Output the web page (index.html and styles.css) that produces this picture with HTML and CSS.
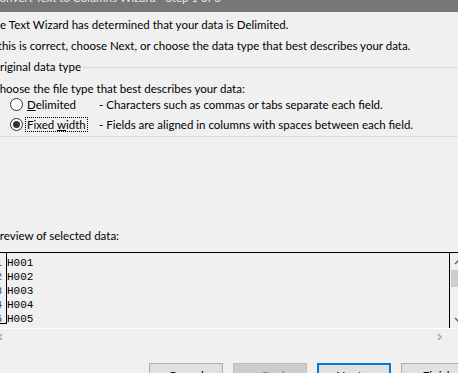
FILE: index.html
```html
<!DOCTYPE html>
<html lang="en">

<head>
    <meta charset="UTF-8">
    <meta name="viewport" content="width=device-width, initial-scale=1.0">
    <link rel="stylesheet" href="styles.css">
</head>

<body>
    <!-- Title bar, cut off at the top -->
    <div class="titlebar">
        <span class="title">Convert Text to Columns Wizard - Step 1 of 3</span>
    </div>

    <main class="content">
        <p class="line intro-1">The Text Wizard has determined that your data is Delimited.</p>
        <p class="line intro-2">If this is correct, choose Next, or choose the data type that best describes your data.</p>

        <!-- Group: original data type -->
        <section class="group">
            <div class="legend">
                <span class="legend-text">Original data type</span>
                <span class="legend-rule"></span>
            </div>
            <p class="line choose">Choose the file type that best describes your data:</p>

            <div class="options">
                <div class="option">
                    <span class="radio"></span>
                    <span class="label-cell"><span class="label"><u>D</u>elimited</span></span>
                    <span class="desc">- Characters such as commas or tabs separate each field.</span>
                </div>
                <div class="option">
                    <span class="radio checked"></span>
                    <span class="label-cell"><span class="label focused">Fixed <u>w</u>idth</span></span>
                    <span class="desc">- Fields are aligned in columns with spaces between each field.</span>
                </div>
            </div>
        </section>

        <p class="line preview-title">Preview of selected data:</p>

        <!-- Preview box with scrollbars -->
        <div class="preview">
            <div class="preview-body">
                <div class="grid">
                    <div class="row-nums">
                        <span>1</span>
                        <span>2</span>
                        <span>3</span>
                        <span>4</span>
                        <span>5</span>
                    </div>
                    <div class="rows">
                        <span>H001</span>
                        <span>H002</span>
                        <span>H003</span>
                        <span>H004</span>
                        <span>H005</span>
                    </div>
                </div>
                <div class="vscroll">
                    <svg class="arrow-up" width="8" height="6" viewBox="0 0 8 6"><path d="M1 5 L4 2 L7 5" fill="none" stroke="#606060" stroke-width="1.5"/></svg>
                    <span class="thumb"></span>
                    <svg class="arrow-down" width="8" height="6" viewBox="0 0 8 6"><path d="M1 1 L4 4 L7 1" fill="none" stroke="#606060" stroke-width="1.5"/></svg>
                </div>
            </div>
            <div class="hscroll">
                <svg class="arrow-left" width="6" height="8" viewBox="0 0 6 8"><path d="M5 1 L2 4 L5 7" fill="none" stroke="#a6a6a6" stroke-width="1.5"/></svg>
                <svg class="arrow-right" width="6" height="8" viewBox="0 0 6 8"><path d="M1 1 L4 4 L1 7" fill="none" stroke="#a6a6a6" stroke-width="1.5"/></svg>
            </div>
        </div>

        <!-- Buttons -->
        <div class="buttons">
            <button class="btn">Cancel</button>
            <button class="btn" disabled>&lt; <u>B</u>ack</button>
            <button class="btn default"><u>N</u>ext &gt;</button>
            <button class="btn"><u>F</u>inish</button>
        </div>
    </main>
</body>

</html>
```

FILE: styles.css
```css
/* Page */
body {
    margin: 0;
    width: 458px;
    height: 373px;
    overflow: hidden;
    background-color: #f0f0f0;
    font-family: 'Lato', 'Noto Sans', sans-serif;
    font-size: 11.5px;
    color: #000;
}

/* Title bar */
.titlebar {
    height: 12px;
    background-color: #777777;
    overflow: hidden;
    white-space: nowrap;
}

.title {
    display: block;
    margin-top: -10px;
    margin-left: -8px;
    line-height: 16px;
    color: #e8e8e8;
}

/* Text lines */
.line {
    margin: 0;
    line-height: 16px;
    white-space: nowrap;
}

.intro-1 {
    margin-top: 5px;
    margin-left: -13px;
}

.intro-2 {
    margin-top: 5px;
    margin-left: -12px;
}

/* Group box */
.group {
    margin-top: 5px;
    border-bottom: 1px solid #dcdcdc;
    padding-bottom: 2px;
}

.legend {
    display: flex;
    align-items: center;
    margin-left: -9px;
    line-height: 16px;
    white-space: nowrap;
}

.legend-rule {
    flex: 1;
    height: 1px;
    margin-left: 2px;
    background-color: #dcdcdc;
}

.choose {
    margin-top: 6px;
    margin-left: -8px;
}

.options {
    margin-top: -3px;
}

.option {
    display: flex;
    align-items: center;
    height: 20px;
    white-space: nowrap;
}

.radio {
    box-sizing: border-box;
    width: 13px;
    height: 13px;
    margin-left: 10px;
    border: 1px solid #333;
    border-radius: 50%;
    background-color: #fff;
    display: flex;
    align-items: center;
    justify-content: center;
}

.radio.checked::after {
    content: "";
    width: 7px;
    height: 7px;
    border-radius: 50%;
    background-color: #333;
}

.label-cell {
    width: 74px;
    margin-left: 2px;
}

.label {
    display: inline-block;
    padding: 0 1px;
    line-height: 13px;
    border: 1px dotted transparent;
}

.label.focused {
    border-color: #000;
}

/* Preview */
.preview-title {
    margin-top: 91px;
    margin-left: -7px;
}

.preview {
    margin-top: 8px;
}

.preview-body {
    display: flex;
    height: 75px;
    border-top: 1px solid #000;
    border-bottom: 1px solid #fff;
}

.grid {
    display: flex;
    width: 449px;
    border-right: 1px solid #000;
    font-family: 'Liberation Mono', monospace;
    font-size: 11px;
}

.row-nums {
    width: 6px;
    height: 67px;
    padding-top: 3px;
    border-right: 1px solid #000;
    border-bottom: 1px solid #000;
    overflow: hidden;
    color: #1a3f9a;
}

.row-nums span {
    display: block;
    width: 10px;
    margin-left: -8px;
    text-align: right;
    line-height: 14px;
}

.rows {
    display: flex;
    flex-direction: column;
    padding-top: 3px;
}

.rows span {
    line-height: 14px;
}

.vscroll {
    position: relative;
    flex: 1;
}

.arrow-up {
    position: absolute;
    left: 4px;
    top: 6px;
}

.thumb {
    position: absolute;
    left: 1px;
    top: 17px;
    width: 12px;
    height: 17px;
    background-color: #cdcdcd;
}

.arrow-down {
    position: absolute;
    left: 4px;
    top: 64px;
}

.hscroll {
    display: flex;
    justify-content: space-between;
    align-items: center;
    height: 16px;
    width: 446px;
    margin-left: -3px;
}

/* Buttons */
.buttons {
    display: flex;
    gap: 10px;
    margin-top: 18px;
    margin-left: 149px;
}

.btn {
    box-sizing: border-box;
    flex: none;
    width: 74px;
    height: 23px;
    padding: 1px 0 0;
    font-family: 'Lato', 'Noto Sans', sans-serif;
    font-size: 12px;
    color: #000;
    background-color: #e1e1e1;
    border: 1px solid #adadad;
}

.btn:disabled {
    color: #838383;
    background-color: #cccccc;
    border-color: #bfbfbf;
}

.btn.default {
    border: 2px solid #0078d7;
}
```
